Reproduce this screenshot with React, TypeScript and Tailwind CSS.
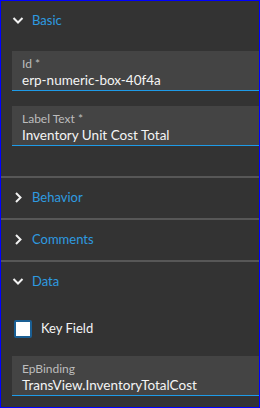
import React from "react";

const ChevronDown: React.FC = () => (
  <svg width="12" height="12" viewBox="0 0 12 12" className="shrink-0">
    <path d="M1.5 3 L6 7.5 L10.5 3" fill="none" stroke="#f2f2f2" strokeWidth="2" />
  </svg>
);

const ChevronRight: React.FC = () => (
  <svg width="12" height="12" viewBox="0 0 12 12" className="shrink-0">
    <path d="M4 1 L8.5 5.5 L4 10" fill="none" stroke="#f2f2f2" strokeWidth="2" />
  </svg>
);

interface SectionHeaderProps {
  title: string;
  open?: boolean;
}

const SectionHeader: React.FC<SectionHeaderProps> = ({ title, open }) => (
  <div className="flex h-[40px] items-center gap-[8px] pl-[11px]">
    {open ? <ChevronDown /> : <ChevronRight />}
    <span className="text-[13px] text-[#2e9be0]">{title}</span>
  </div>
);

interface FieldProps {
  label: string;
  value: string;
}

const Field: React.FC<FieldProps> = ({ label, value }) => (
  <div className="flex h-[40px] flex-col border-b border-[#1e9be8] bg-[#444444] pl-[10px] pt-[5px]">
    <div className="text-[12px] leading-[15px] text-[#bdbdbd]">{label}</div>
    <div className="text-[13.5px] leading-[18px] text-[#f4f4f4]">{value}</div>
  </div>
);

const Divider: React.FC = () => <div className="h-[2px] bg-[#575757]" />;

export default function App() {
  return (
    <div
      className="h-[408px] w-[260px] overflow-hidden border border-[#0000ff] bg-[#333333]"
      style={{ fontFamily: "Lato, 'Liberation Sans', sans-serif" }}
    >
      <SectionHeader title="Basic" open />
      <div className="flex flex-col gap-[15px] pb-[30px] pl-[11px] pt-[10px]">
        <Field label="Id *" value="erp-numeric-box-40f4a" />
        <Field label="Label Text *" value="Inventory Unit Cost Total" />
      </div>
      <Divider />
      <SectionHeader title="Behavior" />
      <Divider />
      <SectionHeader title="Comments" />
      <Divider />
      <SectionHeader title="Data" open />
      <div className="flex flex-col pl-[11px]">
        <div className="flex h-[54px] items-center gap-[9px] pl-[2px]">
          <div className="h-[18px] w-[18px] rounded-[2px] border-2 border-[#1a5f94] bg-white" />
          <span className="text-[13px] text-[#f4f4f4]">Key Field</span>
        </div>
        <Field label="EpBinding" value="TransView.InventoryTotalCost" />
      </div>
    </div>
  );
}
